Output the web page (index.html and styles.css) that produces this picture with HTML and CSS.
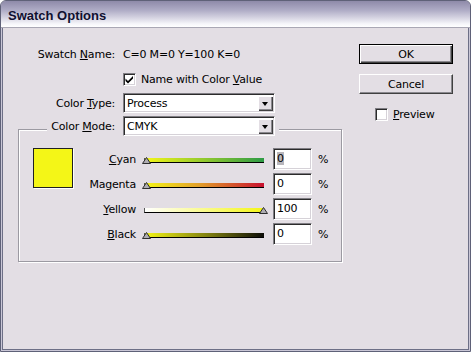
FILE: index.html
```html
<!DOCTYPE html>
<html lang="en">
<head>
  <meta charset="UTF-8" />
  <title>Swatch Options</title>
  <link rel="stylesheet" href="styles.css">
</head>
<body>
  <div class="window">
    <div class="titlebar">Swatch Options</div>

    <div class="dialog">
      <!-- left: swatch settings -->
      <div class="main">
        <div class="row">
          <span class="label">Swatch <u>N</u>ame:</span>
          <span class="value">C=0 M=0 Y=100 K=0</span>
        </div>
        <div class="row row-check">
          <span class="label"></span>
          <label class="check">
            <span class="box">
              <svg width="9" height="9" viewBox="0 0 9 9"><path d="M0.5 3.5 L3 6 L8 1 L8 3.5 L3 8.5 L0.5 6 Z" fill="#000"/></svg>
            </span>
            <span>Name with Color <u>V</u>alue</span>
          </label>
        </div>
        <div class="row">
          <span class="label">Color <u>T</u>ype:</span>
          <div class="select"><span>Process</span><span class="arrow"></span></div>
        </div>

        <fieldset class="group">
          <legend class="row">
            <span class="label label-mode">Color <u>M</u>ode:</span>
            <div class="select"><span>CMYK</span><span class="arrow"></span></div>
          </legend>
          <div class="group-inner">
            <div class="swatch"></div>
            <div class="sliders">
              <span class="slabel"><u>C</u>yan</span>
              <div class="slider">
                <div class="bar cyan"></div>
                <svg class="thumb" style="left: 0px" width="9" height="7" viewBox="0 0 9 7"><path d="M4.5 0.5 L8.5 6.5 L0.5 6.5 Z" fill="#aeacb2" stroke="#2e2e2e"/></svg>
              </div>
              <div class="field"><span class="sel">0</span></div>
              <span class="pct">%</span>

              <span class="slabel">Magenta</span>
              <div class="slider">
                <div class="bar magenta"></div>
                <svg class="thumb" style="left: 0px" width="9" height="7" viewBox="0 0 9 7"><path d="M4.5 0.5 L8.5 6.5 L0.5 6.5 Z" fill="#aeacb2" stroke="#2e2e2e"/></svg>
              </div>
              <div class="field">0</div>
              <span class="pct">%</span>

              <span class="slabel"><u>Y</u>ellow</span>
              <div class="slider">
                <div class="bar yellow"></div>
                <svg class="thumb" style="left: 117px" width="9" height="7" viewBox="0 0 9 7"><path d="M4.5 0.5 L8.5 6.5 L0.5 6.5 Z" fill="#aeacb2" stroke="#2e2e2e"/></svg>
              </div>
              <div class="field">100</div>
              <span class="pct">%</span>

              <span class="slabel"><u>B</u>lack</span>
              <div class="slider">
                <div class="bar black"></div>
                <svg class="thumb" style="left: 0px" width="9" height="7" viewBox="0 0 9 7"><path d="M4.5 0.5 L8.5 6.5 L0.5 6.5 Z" fill="#aeacb2" stroke="#2e2e2e"/></svg>
              </div>
              <div class="field">0</div>
              <span class="pct">%</span>
            </div>
          </div>
        </fieldset>
      </div>

      <!-- right: buttons -->
      <div class="side">
        <button class="btn default">OK</button>
        <button class="btn">Cancel</button>
        <label class="check preview">
          <span class="box"></span>
          <span><u>P</u>review</span>
        </label>
      </div>
    </div>
  </div>
</body>
</html>
```

FILE: styles.css
```css
body {
  margin: 0;
  font-family: "DejaVu Sans", sans-serif;
  font-size: 11px;
  letter-spacing: -0.2px;
  color: #000;
}

.window {
  width: 471px;
  height: 352px;
  box-sizing: border-box;
  background-color: #e3dee4;
  border: 1px solid #5f6178;
  border-radius: 6px 6px 0 0;
  box-shadow: inset 1px 1px 0 #c9c6d6, inset -1px -1px 0 #c9c6d6, inset 2px 2px 0 #6d6f86, inset -2px -2px 0 #6d6f86;
  overflow: hidden;
}

.titlebar {
  height: 26px;
  padding-left: 7px;
  line-height: 29px;
  font-family: "Liberation Sans", sans-serif;
  font-size: 13px;
  font-weight: bold;
  letter-spacing: 0;
  color: #101030;
  background: linear-gradient(to bottom, #8e8aa9 0%, #aeabc5 35%, #d6d4e2 65%, #f6f6fa 88%, #ffffff 100%);
  border-bottom: 1px solid #a9a7b4;
}

.dialog {
  display: flex;
  padding: 16px 0 0 17px;
}

.main {
  display: flex;
  flex-direction: column;
  gap: 4px;
  width: 324px;
}

.row {
  display: flex;
  align-items: center;
  height: 20px;
}

.row-check {
  margin-top: 1px;
}

.label {
  width: 97px;
  margin-right: 8px;
  text-align: right;
  flex-shrink: 0;
}

.check {
  display: flex;
  align-items: center;
  gap: 5px;
}

.box {
  width: 11px;
  height: 11px;
  background: #fff;
  border: 1px solid;
  border-color: #7f7d83 #fff #fff #7f7d83;
  box-shadow: inset 1px 1px 0 #2b2b2b, inset -1px -1px 0 #d6d2d8;
  display: flex;
  align-items: center;
  justify-content: center;
}

.select {
  height: 18px;
  width: 147px;
  padding-left: 3px;
  display: flex;
  align-items: center;
  justify-content: space-between;
  background: #fff;
  border: 1px solid;
  border-color: #7f7d83 #fff #fff #7f7d83;
  box-shadow: inset 1px 1px 0 #2b2b2b, inset -1px -1px 0 #d6d2d8;
}

.arrow {
  width: 15px;
  height: 15px;
  margin-right: 1px;
  background: #e3dee4;
  box-shadow: inset 1px 1px 0 #fff, inset -1px -1px 0 #404040, inset -2px -2px 0 #8a888e;
  position: relative;
}

.arrow::after {
  content: "";
  position: absolute;
  left: 4px;
  top: 6px;
  border-left: 3.5px solid transparent;
  border-right: 3.5px solid transparent;
  border-top: 4px solid #000;
}

.group {
  margin: -1px 0 0 0;
  padding: 0 0 16px 0;
  border: 1px solid #9c9aa2;
  box-shadow: inset 1px 1px 0 #fff, 1px 1px 0 #fff;
}

.group legend {
  margin-left: 28px;
  padding: 0 4px 6px 0;
  background: #e3dee4;
}

.label-mode {
  width: 68px;
}

.group-inner {
  display: flex;
  padding: 6px 0 0 14px;
}

.swatch {
  width: 38px;
  height: 38px;
  background: #f4f617;
  border: 1px solid #202020;
  box-shadow: 1px 1px 0 #fff;
}

.sliders {
  display: grid;
  grid-template-columns: 63px 125px 39px auto;
  grid-auto-rows: 22px;
  column-gap: 6px;
  row-gap: 3px;
  align-items: center;
}

.slabel {
  text-align: right;
}

.slider {
  position: relative;
  height: 22px;
}

.bar {
  position: absolute;
  left: 2px;
  right: 3px;
  top: 10px;
  height: 4px;
  border-bottom: 1px solid #000;
  border-left: 1px solid #555;
}

.cyan { background: linear-gradient(to right, #f4f617, #2e9b46); }
.magenta { background: linear-gradient(to right, #f4f617, #e2a02a 45%, #c8102e); }
.yellow { background: linear-gradient(to right, #ffffff, #f4f617); }
.black { background: linear-gradient(to right, #f4f617, #7b7b10 55%, #0c0c08); }

.thumb {
  position: absolute;
  top: 9px;
}

.field {
  height: 22px;
  line-height: 20px;
  padding-left: 3px;
  box-sizing: border-box;
  background: #fff;
  border: 1px solid;
  border-color: #7f7d83 #fff #fff #7f7d83;
  box-shadow: inset 1px 1px 0 #2b2b2b, inset -1px -1px 0 #d6d2d8;
}

.sel {
  background: #b8b6bc;
}

.side {
  display: flex;
  flex-direction: column;
  margin-left: 17px;
  width: 94px;
}

.btn {
  width: 94px;
  height: 20px;
  padding: 0;
  font-family: "DejaVu Sans", sans-serif;
  font-size: 11px;
  letter-spacing: -0.2px;
  color: #000;
  background: #e3dee4;
  border: 1px solid;
  border-color: #fff #404040 #404040 #fff;
  box-shadow: inset -1px -1px 0 #8a888e;
  margin-bottom: 10px;
}

.btn.default {
  border: 1px solid #000;
  box-shadow: inset 1px 1px 0 #fff, inset -1px -1px 0 #404040, inset -2px -2px 0 #8a888e;
}

.preview {
  margin-left: 16px;
  margin-top: 4px;
}
```
